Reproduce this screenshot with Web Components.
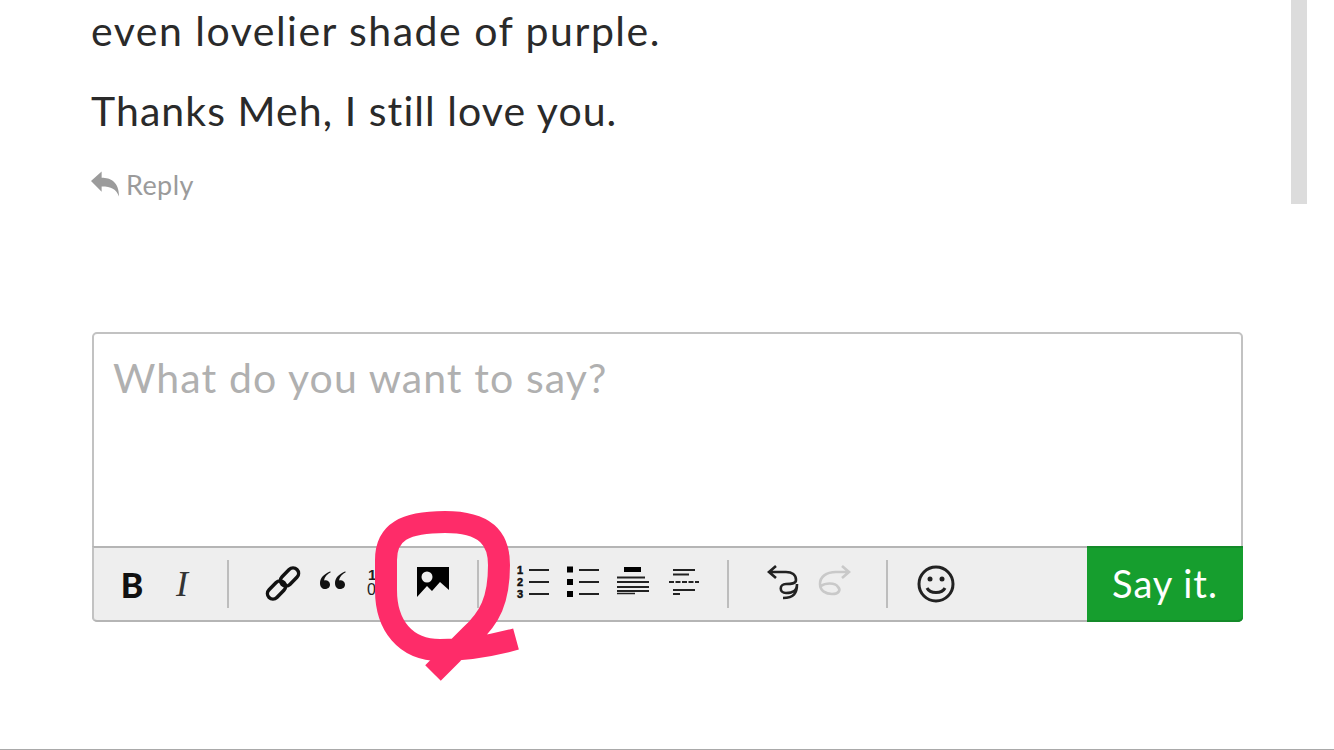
<!DOCTYPE html>
<html>
<head>
<meta charset="utf-8">
<style>
  html, body { margin: 0; padding: 0; background: #fff; }
  body { font-family: Lato, "Open Sans", sans-serif; }
</style>
</head>
<body>
<comment-page>
  <comment-text>
    <p style="letter-spacing:1.5px">even lovelier shade of purple.</p>
    <p style="letter-spacing:1.07px">Thanks Meh, I still love you.</p>
  </comment-text>
  <reply-link>Reply</reply-link>
  <comment-editor placeholder="What do you want to say?" submit="Say it.">
    <tool-btn slot="tools" label="B" kind="bold"></tool-btn>
    <tool-btn slot="tools" label="I" kind="italic"></tool-btn>
    <tool-sep slot="tools"></tool-sep>
    <tool-btn slot="tools" icon="link"></tool-btn>
    <tool-btn slot="tools" icon="quote"></tool-btn>
    <tool-btn slot="tools" icon="code"></tool-btn>
    <tool-btn slot="tools" icon="image"></tool-btn>
    <tool-sep slot="tools"></tool-sep>
    <tool-btn slot="tools" icon="ol"></tool-btn>
    <tool-btn slot="tools" icon="ul"></tool-btn>
    <tool-btn slot="tools" icon="heading"></tool-btn>
    <tool-btn slot="tools" icon="hr"></tool-btn>
    <tool-sep slot="tools"></tool-sep>
    <tool-btn slot="tools" icon="undo"></tool-btn>
    <tool-btn slot="tools" icon="redo"></tool-btn>
    <tool-sep slot="tools" last></tool-sep>
    <tool-btn slot="tools" icon="smile"></tool-btn>
  </comment-editor>
  <pink-circle></pink-circle>
</comment-page>

<script>
const pageTemplate = document.createElement('template')
pageTemplate.innerHTML = `
<style>
  :host {
    display: block;
    position: relative;
    box-sizing: border-box;
    width: 1334px;
    height: 750px;
    padding-left: 92px;
    overflow: hidden;
    border-bottom: 1px solid #a9a9a9;
    color: #2a2a2a;
  }
  .scroll {
    position: absolute;
    left: 1291px;
    top: 0;
    width: 16px;
    height: 204px;
    background: #dcdcdc;
  }
</style>
<slot></slot>
<div class="scroll"></div>
`
customElements.define('comment-page', class extends HTMLElement {
  constructor () {
    super()
    this.attachShadow({ mode: 'open' })
      .appendChild(pageTemplate.content.cloneNode(true))
  }
})

const textTemplate = document.createElement('template')
textTemplate.innerHTML = `
<style>
  :host {
    display: flex;
    flex-direction: column;
    gap: 16px;
    margin: -1px 0 0 -1px;
    font-size: 41px;
    line-height: 64px;
  }
  ::slotted(p) { margin: 0; }
</style>
<slot></slot>
`
customElements.define('comment-text', class extends HTMLElement {
  constructor () {
    super()
    this.attachShadow({ mode: 'open' })
      .appendChild(textTemplate.content.cloneNode(true))
  }
})

const replyTemplate = document.createElement('template')
replyTemplate.innerHTML = `
<style>
  :host {
    display: flex;
    align-items: center;
    gap: 6px;
    height: 34px;
    margin-top: 24px;
    font-size: 27px;
    letter-spacing: .4px;
    color: #9b9b9b;
  }
  svg { width: 29px; height: 26px; display: block; margin-left: -1px; }
</style>
<svg viewBox="0 0 30 26"><path fill="#9b9b9b" d="M0 10 11 0v6.500c9 0 18 4 18 19.500-3-8-8-10.500-18-10.500V21z"/></svg>
<slot></slot>
`
customElements.define('reply-link', class extends HTMLElement {
  constructor () {
    super()
    this.attachShadow({ mode: 'open' })
      .appendChild(replyTemplate.content.cloneNode(true))
  }
})

const editorTemplate = document.createElement('template')
editorTemplate.innerHTML = `
<style>
  :host {
    box-sizing: border-box;
    width: 1151px;
    height: 290px;
    margin-top: 131px;
    display: flex;
    flex-direction: column;
    border: 2px solid #c2c2c2;
    border-radius: 5px;
  }
  .field {
    flex: 1;
    padding: 20px 19px 0;
    font-size: 41px;
    line-height: 48px;
    letter-spacing: 1.1px;
    color: #b0b0b0;
  }
  .bar {
    display: flex;
    height: 72px;
    margin: 0 -2px -2px;
    border-top: 2px solid #b5b5b5;
    border-bottom: 2px solid #b5b5b5;
    border-left: 2px solid #c2c2c2;
    border-radius: 0 0 5px 5px;
    background: #eee;
  }
  .tools {
    flex: 1;
    display: flex;
    align-items: center;
    padding-left: 13px;
  }
  button {
    width: 156px;
    margin: -2px 0 -2px;
    padding: 0 0 3px;
    border: 0;
    border-radius: 0 0 5px 0;
    background: #169e2e;
    box-shadow: inset 0 2px #148a29, inset 0 -2px #148a29;
    color: #fff;
    font: 38px Lato, "Open Sans", sans-serif;
    letter-spacing: 1px;
  }
</style>
<div class="field"></div>
<div class="bar">
  <div class="tools"><slot name="tools"></slot></div>
  <button type="button"></button>
</div>
`
customElements.define('comment-editor', class extends HTMLElement {
  constructor () {
    super()
    this.attachShadow({ mode: 'open' })
      .appendChild(editorTemplate.content.cloneNode(true))
    this.shadowRoot.querySelector('.field').textContent = this.getAttribute('placeholder')
    this.shadowRoot.querySelector('button').textContent = this.getAttribute('submit')
  }
})

// icons are drawn on a 50x40 box, one box per toolbar button
const line = (x1, x2, y, w = 2) => `<path d="M${x1} ${y}H${x2}" stroke="#222" stroke-width="${w}" fill="none"/>`
const num = (t, x, y) => `<text x="${x}" y="${y}" font-family="Liberation Sans" font-weight="700" font-size="11" stroke="#111" stroke-width=".5" fill="#111">${t}</text>`
const icons = {
  link: `<g fill="none" stroke="#111" stroke-width="3.500"><rect x="-10.500" y="-5.500" width="21" height="11" rx="5.500" transform="translate(18.500 26) rotate(-45)"/><rect x="-10.500" y="-5.500" width="21" height="11" rx="5.500" transform="translate(31.500 13) rotate(-45)"/></g>`,
  quote: `<path fill="#111" d="M17 8c-4 2-6.500 5-7 8.500 3-.8 6 1 6 4s-2.300 4.500-5 4.500-5-2-5-6c0-5 4-9 10-11.500zM32 8c-4 2-6.500 5-7 8.500 3-.8 6 1 6 4s-2.300 4.500-5 4.500-5-2-5-6c0-5 4-9 10-11.500z" transform="translate(6 0)"/>`,
  code: `<text x="10" y="16" font-family="Liberation Sans" font-weight="700" font-size="15" fill="#222">1</text><text x="9" y="31" font-family="Liberation Sans" font-size="16" fill="#222">0</text><text x="19" y="31" font-family="Liberation Sans" font-size="16" fill="#222">1</text>`,
  image: `<path fill="#000" d="M9 3H41V26L32 18 24 27 19 22 9 33z"/><circle cx="19" cy="13" r="5.500" fill="#eee"/>`,
  ol: num(1, 9, 10) + num(2, 9, 22) + num(3, 9, 34) + line(21, 41, 6) + line(21, 41, 18) + line(21, 41, 30),
  ul: `<g fill="#000"><rect x="9" y="2.500" width="6" height="6"/><rect x="9" y="15" width="6" height="6"/><rect x="9" y="27" width="6" height="6"/></g>` + line(21, 41, 6) + line(21, 41, 18) + line(21, 41, 30),
  heading: `<rect x="16" y="3" width="17" height="5" fill="#000"/>` + line(9, 37, 13.500) + line(9, 41, 18) + line(9, 41, 23) + line(9, 41, 27) + line(9, 27, 29.500, 1.500),
  hr: line(15, 37, 6) + line(15, 31, 10.500) + `<path d="M11 18H41" stroke="#222" stroke-width="2" stroke-dasharray="5 1.500"/>` + line(15, 37, 26) + line(15, 22, 30),
  undo: `<path fill="none" stroke="#222" stroke-width="2.600" d="M18 2 11 8l7 6M11 8H28C34 8 38 11 38 16 38 20 33 20 28 20 21 20 21 29 28 29 35 29 39 27 39 20 39 29 36 34 25 34"/>`,
  redo: `<path fill="none" stroke="#c9c9c9" stroke-width="2.600" d="M34 2l7 6-7 6M41 8H28C18 8 12 13 12 20 12 27 18 30 24 30 31 30 33 26 30 23 27 18 17 19 13 22"/>`,
  smile: `<circle cx="25" cy="20" r="17" fill="none" stroke="#222" stroke-width="3"/><circle cx="19" cy="15" r="2.500" fill="#222"/><circle cx="31" cy="15" r="2.500" fill="#222"/><path d="M16 24c3 6 15 6 18 0" fill="none" stroke="#222" stroke-width="3"/>`
}

customElements.define('tool-btn', class extends HTMLElement {
  constructor () {
    super()
    const icon = this.getAttribute('icon')
    const kind = this.getAttribute('kind')
    const inner = icon
      ? `<svg width="50" height="40" viewBox="-1 0 50 40">${icons[icon]}</svg>`
      : `<span class="${kind}">${this.getAttribute('label')}</span>`
    this.attachShadow({ mode: 'open' }).innerHTML = `
<style>
  :host {
    display: flex;
    align-items: center;
    justify-content: center;
    flex: none;
    width: 50px;
    height: 40px;
  }
  svg { display: block; }
  .bold { font: 900 34px Lato, sans-serif; color: #111; }
  .italic { font: italic 36px "Liberation Serif", serif; color: #333; }
</style>
${inner}`
  }
})

customElements.define('tool-sep', class extends HTMLElement {
  constructor () {
    super()
    const margin = this.hasAttribute('last') ? '0 22px 0 29px' : '0 28px 0 20px'
    this.attachShadow({ mode: 'open' }).innerHTML = `
<style>
  :host {
    display: block;
    flex: none;
    width: 2px;
    height: 48px;
    margin: ${margin};
    background: #bdbdbd;
  }
</style>`
  }
})

customElements.define('pink-circle', class extends HTMLElement {
  constructor () {
    super()
    this.attachShadow({ mode: 'open' }).innerHTML = `
<style>
  :host { position: absolute; left: 0; top: 0; pointer-events: none; }
  svg { display: block; }
</style>
<svg width="1334" height="750" viewBox="0 0 1334 750">
  <path fill="none" stroke="#fe2c69" stroke-width="22" d="M516 639C490 646 465 650 440 650 405 650 386 625 386 590V560C386 532 405 522 445 522 487 522 499 540 499 565 499 600 490 618 470 636L433 673"/>
</svg>`
  }
})
</script>
</body>
</html>
